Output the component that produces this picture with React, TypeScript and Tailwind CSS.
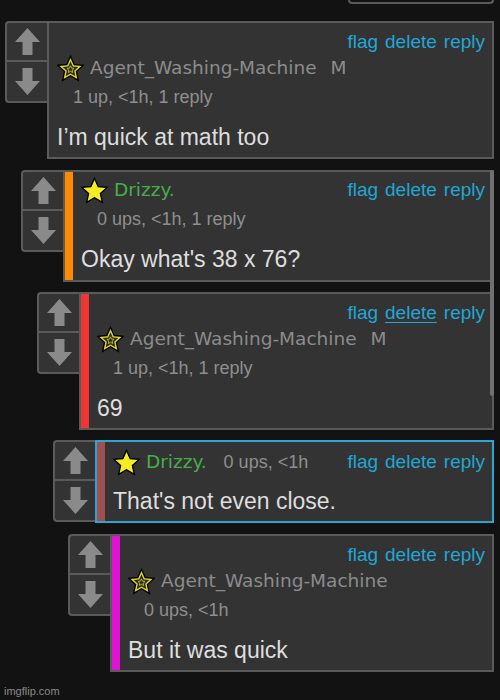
import React from "react";

type Comment = {
  indent: string;
  gap: string;
  layout: "stack" | "side" | "compact";
  star: "hollow" | "solid";
  name: string;
  nameColor: string;
  mod?: boolean;
  meta: string;
  body: string;
  bar?: string;
  frame: string;
  underlineDelete?: boolean;
};

const comments: Comment[] = [
  {
    indent: "ml-[5px]",
    gap: "mt-[17px]",
    layout: "stack",
    star: "hollow",
    name: "Agent_Washing-Machine",
    nameColor: "text-[#8c8c8c]",
    mod: true,
    meta: "1 up, <1h, 1 reply",
    body: "I’m quick at math too",
    frame: "border-[#5a5a5a]",
  },
  {
    indent: "ml-[21px]",
    gap: "mt-[11px]",
    layout: "side",
    star: "solid",
    name: "Drizzy.",
    nameColor: "text-[#45b045]",
    meta: "0 ups, <1h, 1 reply",
    body: "Okay what's 38 x 76?",
    bar: "bg-[#ff8a00]",
    frame: "border-[#5a5a5a]",
  },
  {
    indent: "ml-[37px]",
    gap: "mt-[10px]",
    layout: "stack",
    star: "hollow",
    name: "Agent_Washing-Machine",
    nameColor: "text-[#8c8c8c]",
    mod: true,
    meta: "1 up, <1h, 1 reply",
    body: "69",
    bar: "bg-[#f03535]",
    frame: "border-[#5a5a5a]",
    underlineDelete: true,
  },
  {
    indent: "ml-[53px]",
    gap: "mt-[10px]",
    layout: "compact",
    star: "solid",
    name: "Drizzy.",
    nameColor: "text-[#45b045]",
    meta: "0 ups, <1h",
    body: "That's not even close.",
    bar: "bg-[#9e5050]",
    frame: "border-[#2ba6d3]",
  },
  {
    indent: "ml-[68px]",
    gap: "mt-[11px]",
    layout: "stack",
    star: "hollow",
    name: "Agent_Washing-Machine",
    nameColor: "text-[#8c8c8c]",
    meta: "0 ups, <1h",
    body: "But it was quick",
    bar: "bg-[#e012d4]",
    frame: "border-[#5a5a5a]",
  },
];

const STAR =
  "13,1.2 16.53,9.15 25.17,10.04 18.71,15.85 20.52,24.36 13,20 5.48,24.36 7.29,15.85 0.83,10.04 9.47,9.15";

const Star = ({ kind }: { kind: "hollow" | "solid" }) => (
  <svg width="27" height="27" viewBox="0 0 26 26" className="shrink-0">
    {kind === "solid" ? (
      <polygon points={STAR} fill="#f6ec22" stroke="#000" strokeWidth="1.3" />
    ) : (
      <>
        <polygon points={STAR} fill="#e6da20" stroke="#000" strokeWidth="1.3" />
        <polygon points={STAR} fill="#2a2a2a" transform="translate(13 14) scale(0.62) translate(-13 -14)" />
        <polygon
          points={STAR}
          fill="none"
          stroke="#e6da20"
          strokeWidth="2.6"
          transform="translate(13 14) scale(0.28) translate(-13 -14)"
        />
      </>
    )}
  </svg>
);

const Arrow = ({ down }: { down?: boolean }) => (
  <svg width="25" height="27" viewBox="0 0 25 27" className={down ? "rotate-180" : ""}>
    <path d="M12.5 0 L25 14 H17.5 V27 H7.5 V14 H0 Z" fill="#8a8a8a" />
  </svg>
);

const Votes = () => (
  <div className="w-[42px] shrink-0 border-2 border-r-0 border-[#5a5a5a] rounded-l-[4px] bg-[#333]">
    <div className="h-[39px] flex items-center justify-center border-b-2 border-[#5a5a5a]">
      <Arrow />
    </div>
    <div className="h-[39px] flex items-center justify-center">
      <Arrow down />
    </div>
  </div>
);

const Actions = ({ underline }: { underline?: boolean }) => (
  <div className="flex gap-[7px] text-[19px] leading-[22px] text-[#21a6d6] shrink-0">
    <span>flag</span>
    <span className={underline ? "underline underline-offset-[3px] decoration-1" : ""}>delete</span>
    <span>reply</span>
  </div>
);

const Name = ({ c }: { c: Comment }) => (
  <>
    <Star kind={c.star} />
    <span className={`ml-[6px] font-['DejaVu_Sans',Verdana,sans-serif] text-[18.5px] leading-[26px] whitespace-nowrap ${c.nameColor}`}>
      {c.name}
    </span>
    {c.mod && (
      <span className="ml-[14px] font-['DejaVu_Sans',Verdana,sans-serif] text-[18.5px] leading-[26px] text-[#8c8c8c]">
        M
      </span>
    )}
  </>
);

const Body = ({ text, gap }: { text: string; gap: string }) => (
  <div className={`${gap} h-[28px] text-[23px] leading-[28px] text-[#dedede] whitespace-nowrap`}>{text}</div>
);

const Meta = ({ text }: { text: string }) => (
  <div className="mt-[5px] pl-[16px] h-[22px] text-[18px] leading-[22px] text-[#8f8f8f]">{text}</div>
);

const CommentRow = ({ c }: { c: Comment }) => (
  <div className={`flex items-start ${c.indent} ${c.gap}`}>
    <Votes />
    <div className={`flex flex-1 border-2 ${c.frame} bg-[#333]`}>
      {c.bar && <div className={`w-[8px] shrink-0 ${c.bar}`} />}
      <div className="flex-1 pl-[8px] pr-[7px]">
        {c.layout === "stack" && (
          <div className="pt-[8px] pb-[6px]">
            <div className="flex justify-end">
              <Actions underline={c.underlineDelete} />
            </div>
            <div className="mt-[2px] flex items-center h-[26px]">
              <Name c={c} />
            </div>
            <Meta text={c.meta} />
            <Body text={c.body} gap="mt-[15px]" />
          </div>
        )}
        {c.layout === "side" && (
          <div className="pt-[5px] pb-[7px]">
            <div className="flex items-center h-[26px]">
              <Name c={c} />
              <div className="flex-1" />
              <Actions />
            </div>
            <div className="mt-[1px]">
              <Meta text={c.meta} />
            </div>
            <Body text={c.body} gap="mt-[15px]" />
          </div>
        )}
        {c.layout === "compact" && (
          <div className="pt-[7px] pb-[6px]">
            <div className="flex items-center h-[26px]">
              <Name c={c} />
              <span className="ml-[17px] text-[18px] leading-[22px] text-[#8f8f8f] whitespace-nowrap">{c.meta}</span>
              <div className="flex-1" />
              <Actions />
            </div>
            <Body text={c.body} gap="mt-[12px]" />
          </div>
        )}
      </div>
    </div>
  </div>
);

export default function App() {
  return (
    <div className="relative w-[500px] h-[700px] overflow-hidden bg-[#121212] font-['Liberation_Sans',Arial,sans-serif]">
      <div className="flex flex-col pr-[6px]">
        <div className="self-end w-[146px] h-[4px] border-2 border-t-0 border-[#5a5a5a] rounded-b-[4px]" />
        {comments.map((c, i) => (
          <CommentRow key={i} c={c} />
        ))}
      </div>
      <div className="absolute left-[490px] top-[170px] w-[4px] h-[226px] rounded-full bg-[#707070]" />
      <div className="absolute left-[4px] bottom-[2px] text-[11px] leading-[14px] text-[#8a8a8a]">imgflip.com</div>
    </div>
  );
}
